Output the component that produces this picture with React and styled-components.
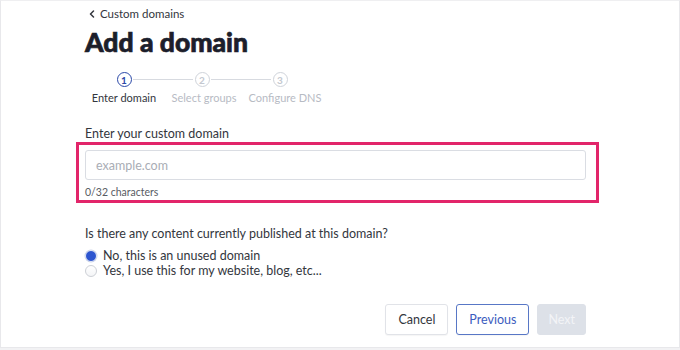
import React, { useState } from "react";
import styled, { createGlobalStyle } from "styled-components";

// ---- Global ----
const GlobalStyle = createGlobalStyle`
  html, body {
    margin: 0;
    padding: 0;
    background: #f2f2f4;
  }
  body {
    font-family: 'Lato', 'Liberation Sans', sans-serif;
    color: #33363d;
  }
  * { box-sizing: border-box; }
`;

// ---- Layout ----
const Page = styled.div`
  height: 348px;
  background: #fff;
  border: 1px solid #e8e8eb;
  border-top-color: #efeff1;
`;

const Content = styled.div`
  width: 501px;
  margin-left: 84px;
  padding-top: 6px;
  display: flex;
  flex-direction: column;
`;

const BackLink = styled.a`
  display: flex;
  align-items: center;
  gap: 5px;
  height: 14px;
  padding-left: 4px;
  font-size: 11.5px;
  line-height: 14px;
  color: #33363d;
  text-decoration: none;
  cursor: pointer;
`;

const Title = styled.h1`
  margin: 5px 0 0;
  font-size: 26.5px;
  line-height: 32px;
  font-weight: 900;
  color: #1c1e2b;
  -webkit-text-stroke: 0.7px #1c1e2b;
`;

// ---- Stepper ----
const Steps = styled.ol`
  list-style: none;
  margin: 14px 0 0;
  padding: 0;
  display: flex;
`;

const Step = styled.li`
  position: relative;
  width: 78px;
  display: flex;
  flex-direction: column;
  align-items: center;
  gap: 4px;

  &:not(:last-child)::after {
    content: "";
    position: absolute;
    top: 7px;
    left: calc(50% + 9px);
    width: calc(100% - 18px);
    height: 1px;
    background: #d7dae0;
  }
`;

const StepDot = styled.span`
  width: 15px;
  height: 15px;
  border-radius: 50%;
  border: 1.5px solid ${({ $active }) => ($active ? "#2a48a8" : "#cfd3da")};
  color: ${({ $active }) => ($active ? "#2a48a8" : "#c4c8d0")};
  font-size: 10px;
  font-weight: 700;
  line-height: 12px;
  display: flex;
  align-items: center;
  justify-content: center;
`;

const StepLabel = styled.span`
  font-size: 11px;
  line-height: 14px;
  white-space: nowrap;
  padding-left: ${({ $shift }) => $shift || 0}px;
  color: ${({ $active }) => ($active ? "#33363d" : "#b7bbc4")};
`;

// ---- Field ----
const FieldLabel = styled.label`
  margin-top: 21px;
  font-size: 12.5px;
  line-height: 16px;
  color: #33363d;
`;

const Highlight = styled.div`
  margin-left: -9px;
  width: 523px;
  border: 3px solid #e2256a;
  padding: 5px 10px 1px 6px;
`;

const Input = styled.input`
  display: block;
  width: 100%;
  height: 30px;
  border: 1px solid #dadde3;
  border-radius: 3px;
  padding: 0 10px;
  font-family: inherit;
  font-size: 12.5px;
  color: #33363d;
  outline: none;

  &::placeholder {
    color: #a9adb5;
  }
`;

const Counter = styled.div`
  margin-top: 6px;
  font-size: 10.5px;
  line-height: 13px;
  color: #575b63;
`;

// ---- Radios ----
const Question = styled.p`
  margin: 23px 0 6px;
  font-size: 12.5px;
  line-height: 16px;
  color: #33363d;
`;

const RadioRow = styled.label`
  display: flex;
  align-items: center;
  gap: 6px;
  height: 15px;
  font-size: 12.5px;
  line-height: 15px;
  color: #33363d;
  cursor: pointer;
`;

const RadioMark = styled.span`
  width: 12px;
  height: 12px;
  border-radius: 50%;
  flex: none;
  ${({ $checked }) =>
    $checked
      ? `
    background: #2d55cf;
    border: 1.5px solid #e3e8f4;
    box-shadow: 0 0 0 0.5px #cdd5e8;
  `
      : `
    background: linear-gradient(#fff, #f4f5f7);
    border: 1px solid #cdd0d6;
  `}
`;

// ---- Actions ----
const Actions = styled.div`
  margin-top: 26px;
  display: flex;
  justify-content: flex-end;
  gap: 8px;
`;

const Button = styled.button`
  height: 31px;
  padding: 0 12px;
  border-radius: 3px;
  font-family: inherit;
  font-size: 12.5px;
  cursor: pointer;
  border: 1px solid #e1e3e8;
  background: #fff;
  color: #33363d;
  box-shadow: 0 1px 1px rgba(0, 0, 0, 0.04);

  ${({ $variant }) =>
    $variant === "outline" &&
    `
    border-color: #5877c6;
    color: #3b5cbe;
  `}

  ${({ $variant }) =>
    $variant === "disabled" &&
    `
    padding: 0 10px;
    border-color: #dde1e8;
    background: #dde1e8;
    color: #f3f4f7;
    box-shadow: none;
    cursor: default;
  `}
`;

const Chevron = () => (
  <svg width="6" height="8" viewBox="0 0 6 8" fill="none">
    <path d="M4.5 1L1.5 4l3 3" stroke="#33363d" strokeWidth="1.5" strokeLinecap="round" strokeLinejoin="round" />
  </svg>
);

const steps = [
  { label: "Enter domain", shift: 0 },
  { label: "Select groups", shift: 4 },
  { label: "Configure DNS", shift: 10 },
];

export default function App() {
  const [domain, setDomain] = useState("");
  const [used, setUsed] = useState(false);

  return (
    <>
      <GlobalStyle />
      <Page>
        <Content>
          <BackLink>
            <Chevron />
            Custom domains
          </BackLink>
          <Title>Add a domain</Title>

          <Steps>
            {steps.map((s, i) => (
              <Step key={s.label}>
                <StepDot $active={i === 0}>{i + 1}</StepDot>
                <StepLabel $active={i === 0} $shift={s.shift}>
                  {s.label}
                </StepLabel>
              </Step>
            ))}
          </Steps>

          <FieldLabel htmlFor="domain">Enter your custom domain</FieldLabel>
          <Highlight>
            <Input
              id="domain"
              placeholder="example.com"
              maxLength={32}
              value={domain}
              onChange={(e) => setDomain(e.target.value)}
            />
            <Counter>{domain.length}/32 characters</Counter>
          </Highlight>

          <Question>Is there any content currently published at this domain?</Question>
          <RadioRow onClick={() => setUsed(false)}>
            <RadioMark $checked={!used} />
            No, this is an unused domain
          </RadioRow>
          <RadioRow onClick={() => setUsed(true)}>
            <RadioMark $checked={used} />
            Yes, I use this for my website, blog, etc...
          </RadioRow>

          <Actions>
            <Button>Cancel</Button>
            <Button $variant="outline">Previous</Button>
            <Button $variant="disabled" disabled>
              Next
            </Button>
          </Actions>
        </Content>
      </Page>
    </>
  );
}
